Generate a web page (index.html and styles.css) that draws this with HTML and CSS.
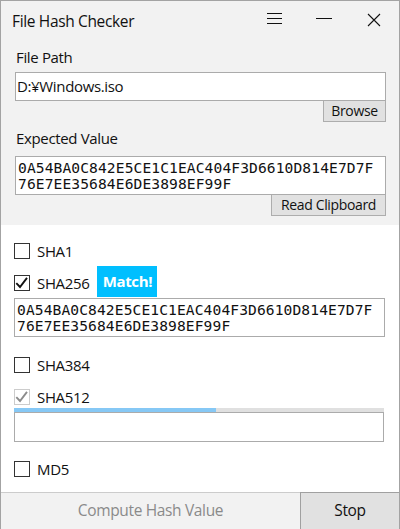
FILE: index.html
```html
<!DOCTYPE html>
<html>
<head>
<meta charset="utf-8">
<title>File Hash Checker</title>
<link rel="stylesheet" href="styles.css">
</head>
<body>
<div class="window">
  <div class="top">
    <div class="titlebar">
      <div class="title">File Hash Checker</div>
      <div class="caption-buttons">
        <svg class="cap" width="50" height="40" viewBox="0 0 50 40"><path d="M18 12.5H33M18 17.5H33M18 22.5H33" stroke="#111" stroke-width="1" fill="none"/></svg>
        <svg class="cap" width="50" height="40" viewBox="0 0 50 40"><path d="M17 17.5H33" stroke="#111" stroke-width="1" fill="none"/></svg>
        <svg class="cap" width="50" height="40" viewBox="0 0 50 40"><path d="M19 13L31 25M31 13L19 25" stroke="#111" stroke-width="1.1" fill="none"/></svg>
      </div>
    </div>
    <div class="form">
      <div class="label">File Path</div>
      <div class="textbox single">D:¥Windows.iso</div>
      <div class="btnrow"><div class="button browse">Browse</div></div>
      <div class="label label2">Expected Value</div>
      <div class="textbox mono">0A54BA0C842E5CE1C1EAC404F3D6610D814E7D7F<br>76E7EE35684E6DE3898EF99F</div>
      <div class="btnrow"><div class="button clip">Read Clipboard</div></div>
    </div>
  </div>
  <div class="main">
    <div class="row r-sha1"><span class="check"></span><span class="cb-label">SHA1</span></div>
    <div class="row r-sha256"><span class="check checked"><svg width="16" height="16" viewBox="0 0 16 16"><path d="M2.3 8.2L6 12L13 2.8" stroke="#111" stroke-width="1.9" fill="none"/></svg></span><span class="cb-label">SHA256</span><span class="badge">Match!</span></div>
    <div class="textbox mono result">0A54BA0C842E5CE1C1EAC404F3D6610D814E7D7F<br>76E7EE35684E6DE3898EF99F</div>
    <div class="row r-sha384"><span class="check"></span><span class="cb-label">SHA384</span></div>
    <div class="row r-sha512"><span class="check disabled"><svg width="16" height="16" viewBox="0 0 16 16"><path d="M2.3 8.2L6 12L13 2.8" stroke="#8c8c8c" stroke-width="1.9" fill="none"/></svg></span><span class="cb-label">SHA512</span></div>
    <div class="progress"><div class="progress-fill" style="width: 54.6%"></div></div>
    <div class="textbox empty"></div>
    <div class="row r-md5"><span class="check"></span><span class="cb-label">MD5</span></div>
  </div>
  <div class="bottom">
    <div class="compute">Compute Hash Value</div>
    <div class="stop">Stop</div>
  </div>
</div>
</body>
</html>
```
FILE: styles.css
```css
html, body {
  margin: 0;
  padding: 0;
  background: #ffffff;
}
body {
  font-family: "Open Sans", "Noto Sans", sans-serif;
  color: #111;
  letter-spacing: -0.35px;
}
.window {
  width: 400px;
  height: 529px;
  box-sizing: border-box;
  border: 1px solid #a3a3a3;
  border-bottom: none;
  display: flex;
  flex-direction: column;
  background: #ffffff;
}
.top {
  background: #f2f2f2;
  height: 224px;
  flex: none;
}
.titlebar {
  height: 40px;
  display: flex;
  align-items: center;
  justify-content: space-between;
}
.title {
  padding-left: 11px;
  font-size: 15.5px;
  line-height: 20px;
  margin-top: -1px;
}
.caption-buttons {
  display: flex;
}
.cap {
  display: block;
}
.form {
  padding: 0 13px 0 14px;
}
.label {
  font-size: 15px;
  line-height: 20px;
  margin-top: 6px;
  padding-left: 1px;
  height: 20px;
}
.label2 {
  margin-top: 6px;
}
.textbox {
  box-sizing: border-box;
  border: 1px solid #ababab;
  background: #ffffff;
  color: #111;
}
.single {
  margin-top: 5px;
  height: 29px;
  font-size: 15px;
  line-height: 27px;
  padding-left: 1px;
}
.mono {
  font-family: "DejaVu Sans Mono", "Liberation Mono", monospace;
  font-size: 14.6px;
  line-height: 16px;
  letter-spacing: 0.1px;
  padding: 3px 0 0 2px;
  height: 39px;
  white-space: nowrap;
}
.form .mono {
  margin-top: 8px;
}
.btnrow {
  display: flex;
  justify-content: flex-end;
}
.button {
  box-sizing: border-box;
  background: #e1e1e1;
  border: 1px solid #adadad;
  border-top: none;
  font-size: 14px;
  color: #111;
  text-align: center;
}
.browse {
  width: 63px;
  height: 21px;
  line-height: 20px;
}
.clip {
  width: 115px;
  height: 21px;
  line-height: 20px;
}
.main {
  padding: 0 14px 0 13px;
  display: flex;
  flex-direction: column;
  flex: 1;
}
.row {
  display: flex;
  align-items: center;
  height: 16px;
}
.check {
  box-sizing: border-box;
  width: 16px;
  height: 16px;
  border: 1px solid #333;
  background: #fff;
  flex: none;
}
.check svg {
  display: block;
  margin: -1px;
}
.check.disabled {
  border-color: #cccccc;
}
.cb-label {
  font-size: 15px;
  margin-left: 7px;
  line-height: 20px;
}
.r-sha1 {
  margin-top: 18px;
}
.r-sha256 {
  margin-top: 7px;
  height: 31px;
}
.r-sha256 .check {
  margin-top: 3px;
}
.r-sha256 .cb-label {
  margin-top: 3px;
}
.badge {
  margin-left: 8px;
  background: #00bfff;
  color: #ffffff;
  font-weight: bold;
  font-size: 15px;
  height: 31px;
  line-height: 31px;
  width: 60px;
  text-align: center;
}
.result {
  margin-top: 1px;
}
.r-sha384 {
  margin-top: 20px;
}
.r-sha512 {
  margin-top: 16px;
}
.progress {
  margin-top: 3px;
  height: 4px;
  background: #e0e0e0;
  margin-right: 1px;
}
.progress-fill {
  height: 4px;
  background: #86c8f5;
}
.empty {
  height: 30px;
  margin-right: 1px;
}
.r-md5 {
  margin-top: 19px;
}
.bottom {
  height: 37px;
  flex: none;
  display: flex;
}
.compute {
  box-sizing: border-box;
  width: 299px;
  background: #f2f2f2;
  border-top: 1px solid #cccccc;
  color: #8a8a8a;
  font-size: 15.5px;
  text-align: center;
  line-height: 35px;
}
.stop {
  box-sizing: border-box;
  flex: 1;
  background: #e1e1e1;
  border: 1px solid #a0a0a0;
  border-bottom: none;
  border-right: none;
  font-size: 15.5px;
  text-align: center;
  line-height: 35px;
}
```
